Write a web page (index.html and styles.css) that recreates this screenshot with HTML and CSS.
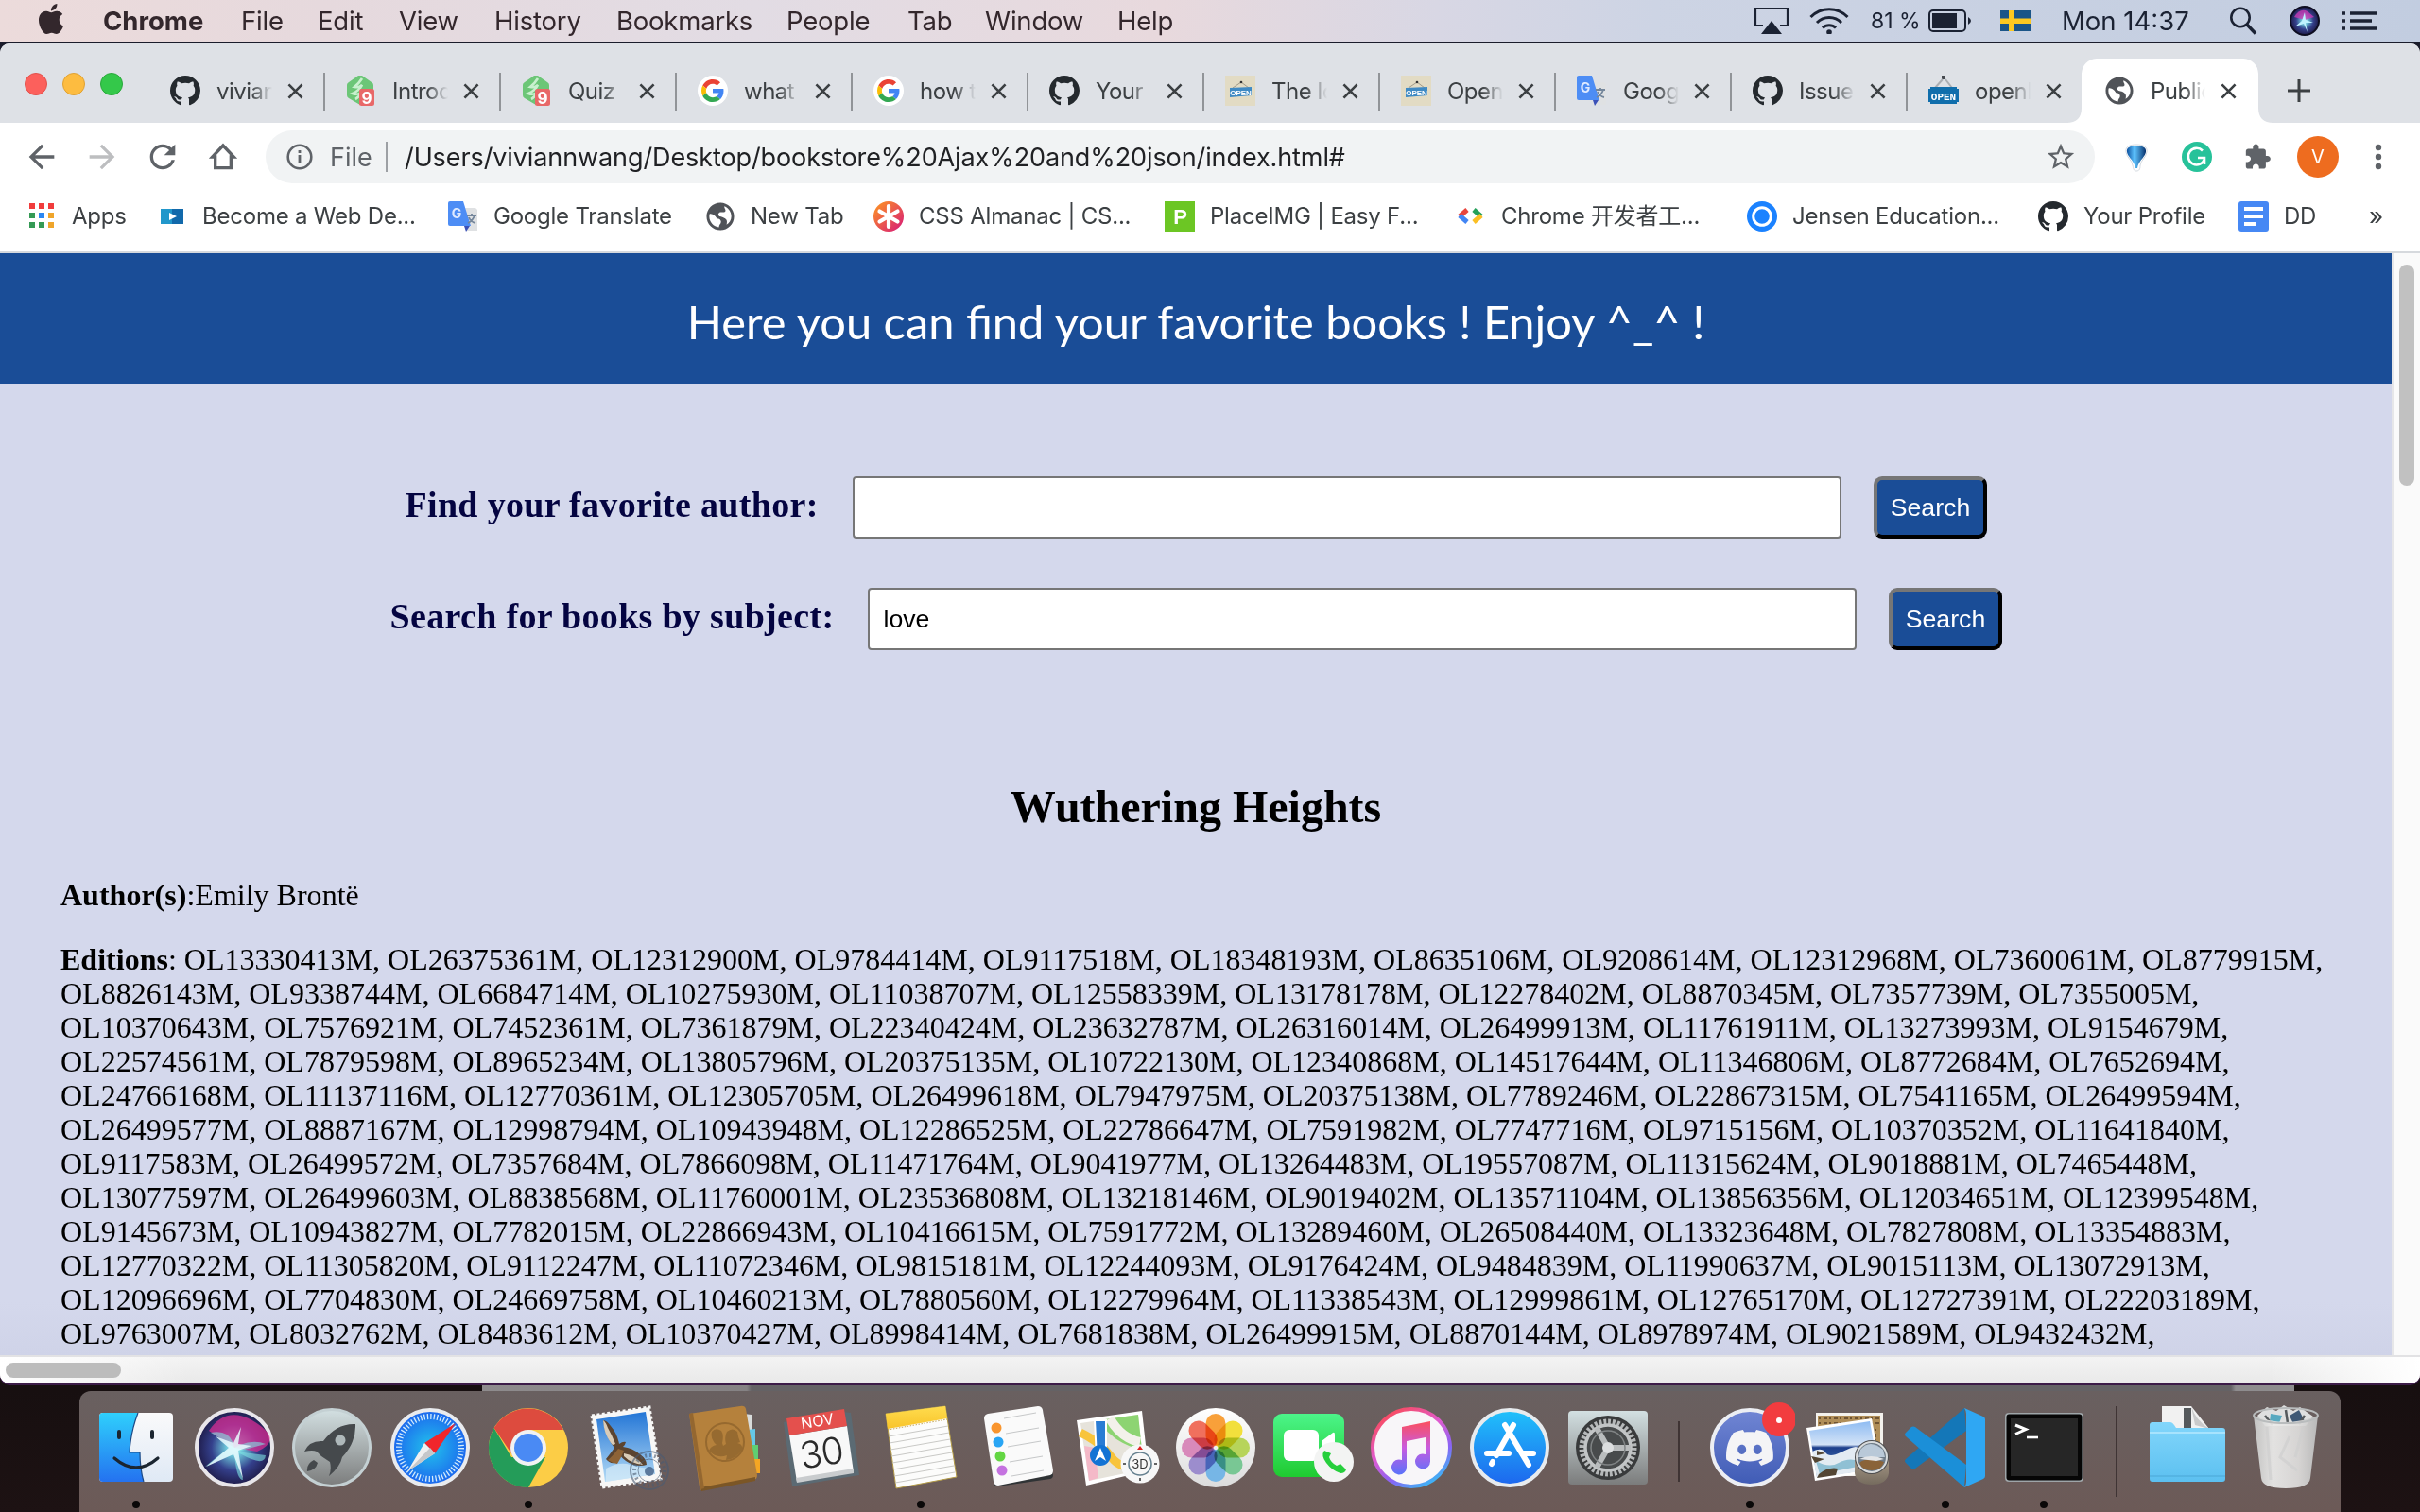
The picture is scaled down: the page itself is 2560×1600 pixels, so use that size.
FILE: index.html
```html
<!DOCTYPE html>
<html lang="en">
<head>
<meta charset="utf-8">
<title>Public library</title>
<link rel="stylesheet" href="styles.css">
</head>
<body>
<svg class="defs" width="0" height="0">
  <defs>
    <linearGradient id="finderL" x2="0" y2="1"><stop offset="0" stop-color="#2fd0fc"/><stop offset="1" stop-color="#2472f0"/></linearGradient>
    <linearGradient id="finderR" x2="0" y2="1"><stop offset="0" stop-color="#fafafb"/><stop offset="1" stop-color="#dfe9f5"/></linearGradient>
    <radialGradient id="siriG" cx=".5" cy=".5" r=".55"><stop offset="0" stop-color="#d8fbff"/><stop offset=".2" stop-color="#6cc4d8"/><stop offset=".55" stop-color="#34408c"/><stop offset="1" stop-color="#191238"/></radialGradient>
    <linearGradient id="metal" x2="0" y2="1"><stop offset="0" stop-color="#d3e0e2"/><stop offset="1" stop-color="#7b7c7c"/></linearGradient>
    <radialGradient id="safariG"><stop offset="0" stop-color="#22c3ec"/><stop offset="1" stop-color="#1c66ee"/></radialGradient>
    <linearGradient id="sky" x2="0" y2="1"><stop offset="0" stop-color="#2275d6"/><stop offset="1" stop-color="#b5dcf6"/></linearGradient>
    <linearGradient id="white" x2="0" y2="1"><stop offset="0" stop-color="#fff"/><stop offset="1" stop-color="#dcdcdc"/></linearGradient>
    <linearGradient id="yellow" x2="0" y2="1"><stop offset="0" stop-color="#ffdc4e"/><stop offset="1" stop-color="#f8c42a"/></linearGradient>
    <linearGradient id="green" x2="0" y2="1"><stop offset="0" stop-color="#4cf58a"/><stop offset="1" stop-color="#1fca30"/></linearGradient>
    <linearGradient id="music" x1=".2" x2=".8" y2="1"><stop offset="0" stop-color="#fb4a55"/><stop offset=".4" stop-color="#e05bd0"/><stop offset=".7" stop-color="#8a63f5"/><stop offset="1" stop-color="#2fc3f5"/></linearGradient>
    <linearGradient id="note" x2="0" y2="1"><stop offset="0" stop-color="#fb4f5e"/><stop offset=".5" stop-color="#c85be0"/><stop offset="1" stop-color="#5a72fa"/></linearGradient>
    <linearGradient id="store" x2="0" y2="1"><stop offset="0" stop-color="#20c2fb"/><stop offset="1" stop-color="#1d66ee"/></linearGradient>
    <linearGradient id="discord" x2="0" y2="1"><stop offset="0" stop-color="#7186d4"/><stop offset="1" stop-color="#3f5bb5"/></linearGradient>
    <linearGradient id="folder" x2="0" y2="1"><stop offset="0" stop-color="#82d6fb"/><stop offset="1" stop-color="#5cc0f0"/></linearGradient>
    <linearGradient id="bin" x2="1" y2="0"><stop offset="0" stop-color="#c9cac9"/><stop offset=".3" stop-color="#ececeb"/><stop offset=".7" stop-color="#dedddc"/><stop offset="1" stop-color="#bfc0c0"/></linearGradient>
    <linearGradient id="css" x2="1" y2="1"><stop offset="0" stop-color="#ff9a1f"/><stop offset="1" stop-color="#d6177b"/></linearGradient>
    <linearGradient id="balloon" x2="1" y2="0"><stop offset="0" stop-color="#0b4f9e"/><stop offset=".4" stop-color="#5fc4ff"/><stop offset="1" stop-color="#05306c"/></linearGradient>
    <linearGradient id="sea" x2="0" y2="1"><stop offset="0" stop-color="#8fbcf2"/><stop offset=".42" stop-color="#d3e3f7"/><stop offset=".47" stop-color="#1d3f8c"/><stop offset="1" stop-color="#4b7fb8"/></linearGradient>
    <linearGradient id="loupe" x2="0" y2="1"><stop offset="0" stop-color="#a49684"/><stop offset="1" stop-color="#756b5e"/></linearGradient>
  </defs>
</svg>
<svg class="symbols">
  <symbol id="github" viewBox="0 0 16 16"><path fill="#24292e" d="M8 0C3.58 0 0 3.58 0 8c0 3.54 2.29 6.53 5.47 7.59.4.07.55-.17.55-.38 0-.19-.01-.82-.01-1.49-2.01.37-2.53-.49-2.69-.94-.09-.23-.48-.94-.82-1.13-.28-.15-.68-.52-.01-.53.63-.01 1.08.58 1.23.82.72 1.21 1.87.87 2.33.66.07-.52.28-.87.51-1.07-1.78-.2-3.64-.89-3.64-3.95 0-.87.31-1.59.82-2.15-.08-.2-.36-1.02.08-2.12 0 0 .67-.21 2.2.82.64-.18 1.32-.27 2-.27s1.36.09 2 .27c1.53-1.04 2.2-.82 2.2-.82.44 1.1.16 1.92.08 2.12.51.56.82 1.27.82 2.15 0 3.07-1.87 3.75-3.65 3.95.29.25.54.73.54 1.48 0 1.07-.01 1.93-.01 2.2 0 .21.15.46.55.38A8.01 8.01 0 0 0 16 8c0-4.42-3.58-8-8-8z"/></symbol>
  <symbol id="google" viewBox="0 0 64 64"><circle cx="32" cy="32" r="32" fill="#fff"/><g transform="translate(8 8)"><path fill="#EA4335" d="M24 9.5c3.54 0 6.71 1.22 9.21 3.6l6.85-6.85C35.9 2.38 30.47 0 24 0 14.62 0 6.51 5.38 2.56 13.22l7.98 6.19C12.43 13.72 17.74 9.5 24 9.5z"/><path fill="#4285F4" d="M46.98 24.55c0-1.57-.15-3.09-.38-4.55H24v9.02h12.94c-.58 2.96-2.26 5.48-4.78 7.18l7.73 6c4.51-4.18 7.09-10.36 7.09-17.65z"/><path fill="#FBBC05" d="M10.53 28.59c-.48-1.45-.76-2.99-.76-4.59s.27-3.14.76-4.59l-7.98-6.19C.92 16.46 0 20.12 0 24c0 3.88.92 7.54 2.56 10.78l7.97-6.19z"/><path fill="#34A853" d="M24 48c6.48 0 11.93-2.13 15.89-5.81l-7.73-6c-2.15 1.45-4.92 2.3-8.16 2.3-6.26 0-11.57-4.22-13.47-9.91l-7.98 6.19C6.51 42.62 14.62 48 24 48z"/></g></symbol>
  <symbol id="treehouse" viewBox="0 0 32 32"><path d="M13 0q2-1 4 0l10 7q2 1 2 3v11q0 2-2 3L15 31 3 24q-2-1-2-3V10q0-2 2-3z" fill="#6cc677"/><path d="M17 3q-3 5-8 9 5 1 8-2-3 6-10 9 5 2 9-1-2 5-6 7" fill="none" stroke="#c9f0ce" stroke-width="2.600"/><rect x="14" y="14" width="16" height="18" rx="2.500" fill="#e86868"/><text x="22" y="29.500" text-anchor="middle" class="fav-nine">9</text></symbol>
  <symbol id="opensign" viewBox="0 0 32 32"><path fill="#e2dbc4" d="M0 0h32v32H0z"/><path d="M8 13l9-6 8 6" fill="none" stroke="#a09a88"/><circle cx="17" cy="7" r="1.300" fill="#333"/><path d="M5 13l23-1v9L5 23z" fill="#3f8ac4"/><text x="16.500" y="21" text-anchor="middle" class="fav-open">OPEN</text></symbol>
  <symbol id="openlib" viewBox="0 0 32 32"><path fill="#45494f" d="M14 0h4v4h-4z"/><path d="M15 4L7 13M18 4l7 9" stroke="#aaaeb3" stroke-width="2"/><path fill="#106eac" d="M2 12h28v2h2v14h-2v2H2v-2H0V14h2z"/><text x="16" y="26" text-anchor="middle" class="fav-openlib">OPEN</text></symbol>
  <symbol id="translate" viewBox="0 0 32 32"><path d="M12 7h17l2 2v22H19z" fill="#dfe1e3"/><path d="M17 26h6l-4 6z" fill="#3b51b8"/><path d="M2 0h14l8 26H2q-2 0-2-2V2q0-2 2-2z" fill="#4d8df5"/><text x="9" y="18" text-anchor="middle" class="fav-g">G</text><path d="M20 15h10M25 13v2M28 15q-2 6-7 8M22 17q2 5 7 6" fill="none" stroke="#74869b" stroke-width="1.800"/></symbol>
  <symbol id="globe" viewBox="1 1 22 22"><path fill="#505358" d="M12 2C6.480 2 2 6.480 2 12s4.480 10 10 10 10-4.480 10-10S17.520 2 12 2zm-1 17.930c-3.950-.49-7-3.850-7-7.930 0-.62.08-1.210.21-1.790C6 9.500 9 12 9.500 13.500c2 0 3 1 3 2.500s-1.500 2-1.500 3.930zM16.500 18c.5-2 .5-3.500-1-4.500s-2-1-4-1.500c-1.500-1-1-2.500 0-3 1.500-.5 2.500.5 4-.5 1-1.500-1-2.500-.5-3.910 2.930 1.190 5 4.060 5 7.410 0 2.800-1.500 4.800-3.500 6z"/></symbol>
  <symbol id="x" viewBox="0 0 18 18"><path d="M1.500 1.500l15 15M16.500 1.500l-15 15" stroke="#3c4043" stroke-width="2.800"/></symbol>
</svg>

<header class="menubar">
  <nav class="menus">
    <svg class="apple" viewBox="0 0 24 24"><path fill="#33272c" d="M12.152 6.896c-.948 0-2.415-1.078-3.960-1.040-2.040.027-3.910 1.183-4.961 3.014-2.117 3.675-.546 9.103 1.519 12.090 1.013 1.454 2.208 3.090 3.792 3.039 1.520-.065 2.090-.987 3.935-.987 1.831 0 2.350.987 3.960.948 1.637-.026 2.676-1.480 3.676-2.948 1.156-1.688 1.636-3.325 1.662-3.415-.039-.013-3.182-1.221-3.220-4.857-.026-3.040 2.480-4.494 2.597-4.559-1.429-2.090-3.623-2.324-4.390-2.376-2-.156-3.675 1.090-4.610 1.090zM15.530 3.830c.843-1.012 1.400-2.427 1.245-3.830-1.207.052-2.662.805-3.532 1.818-.78.896-1.454 2.338-1.273 3.714 1.338.104 2.715-.688 3.559-1.701"/></svg>
    <b>Chrome</b><span>File</span><span>Edit</span><span>View</span><span>History</span><span>Bookmarks</span><span>People</span><span>Tab</span><span>Window</span><span>Help</span>
  </nav>
  <div class="status">
    <svg width="36" height="28" viewBox="0 0 36 28"><path d="M9 19H1V1h34v18h-8" fill="none" stroke="#1b2233" stroke-width="2.200"/><path d="M18 14l11 14H7z" fill="#1b2233"/></svg>
    <svg width="42" height="28" viewBox="0 0 42 28"><g fill="none" stroke="#1b2233" stroke-width="3"><path d="M1.500 10a27 27 0 0 1 39 0"/><path d="M8 16a18 18 0 0 1 26 0"/><path d="M14 21.500a10 10 0 0 1 14 0"/></g><circle cx="21" cy="26" r="2.800" fill="#1b2233"/></svg>
    <span class="percent">81 %</span>
    <svg width="46" height="24" viewBox="0 0 46 24"><rect x="1" y="1" width="38" height="22" rx="4" fill="none" stroke="#1b2233" stroke-width="2"/><rect x="4" y="4" width="26" height="16" fill="#1b2233"/><path d="M42 8q6 4 0 8z" fill="#1b2233"/></svg>
    <svg width="32" height="22" viewBox="0 0 32 22"><path fill="#1a5588" d="M0 0h32v22H0z"/><path fill="#fcc820" d="M9 0h6v22H9zM0 8.500h32v5.500H0z"/></svg>
    <span class="clock">Mon 14:37</span>
    <svg width="30" height="30" viewBox="0 0 30 30"><circle cx="12" cy="11.500" r="9.700" fill="none" stroke="#1b2233" stroke-width="2.600"/><path d="M19 19l9 9.500" stroke="#1b2233" stroke-width="3.400"/></svg>
    <svg width="32" height="32" viewBox="-16 -16 32 32"><circle r="15" fill="url(#siriG)" stroke="#0d0d20" stroke-width="2"/><path d="M-11-4q6-10 14-6l7 6-10 3z" fill="#d239b5" opacity=".75"/><path d="M0-9L1-1 9 2 1 2 3 12-1 3-10 6-3 0z" fill="#bff3ff"/></svg>
    <svg width="38" height="20" viewBox="0 0 38 20"><path d="M0 2h4M0 10h4M0 18h4M9 2h28M9 10h23M9 18h28" stroke="#1b2233" stroke-width="3.600"/></svg>
  </div>
</header>

<main class="window">
  <div class="tabstrip">
    <div class="lights"><i class="red"></i><i class="amber"></i><i class="lime"></i></div>
    <div class="tab"><svg><use href="#github"/></svg><span>viviann</span><svg class="x"><use href="#x"/></svg></div>
    <div class="tab"><svg><use href="#treehouse"/></svg><span>Introdu</span><svg class="x"><use href="#x"/></svg></div>
    <div class="tab"><svg><use href="#treehouse"/></svg><span>Quiz</span><svg class="x"><use href="#x"/></svg></div>
    <div class="tab"><svg><use href="#google"/></svg><span>what</span><svg class="x"><use href="#x"/></svg></div>
    <div class="tab"><svg><use href="#google"/></svg><span>how to</span><svg class="x"><use href="#x"/></svg></div>
    <div class="tab"><svg><use href="#github"/></svg><span>Your</span><svg class="x"><use href="#x"/></svg></div>
    <div class="tab"><svg><use href="#opensign"/></svg><span>The lo</span><svg class="x"><use href="#x"/></svg></div>
    <div class="tab"><svg><use href="#opensign"/></svg><span>Open</span><svg class="x"><use href="#x"/></svg></div>
    <div class="tab"><svg><use href="#translate"/></svg><span>Google</span><svg class="x"><use href="#x"/></svg></div>
    <div class="tab"><svg><use href="#github"/></svg><span>Issues</span><svg class="x"><use href="#x"/></svg></div>
    <div class="tab last"><svg><use href="#openlib"/></svg><span>openli</span><svg class="x"><use href="#x"/></svg></div>
    <div class="tab active"><svg><use href="#globe"/></svg><span>Public</span><svg class="x"><use href="#x"/></svg></div>
    <svg class="plus" viewBox="0 0 24 24"><path d="M12 0v24M0 12h24" stroke="#3c4043" stroke-width="3"/></svg>
  </div>

  <div class="toolbar">
    <svg class="nav" viewBox="0 0 24 24"><path fill="#5f6368" d="M20 11H7.830l5.590-5.590L12 4l-8 8 8 8 1.410-1.410L7.830 13H20v-2z"/></svg>
    <svg class="nav" viewBox="0 0 24 24"><path fill="#bdbec0" d="M4 11h12.170l-5.590-5.590L12 4l8 8-8 8-1.410-1.410L16.170 13H4v-2z"/></svg>
    <svg class="nav" viewBox="0 0 24 24"><path fill="#5f6368" d="M17.650 6.350C16.200 4.900 14.210 4 12 4c-4.420 0-7.990 3.580-7.990 8s3.570 8 7.990 8c3.730 0 6.840-2.550 7.730-6h-2.080c-.82 2.330-3.040 4-5.650 4-3.310 0-6-2.690-6-6s2.690-6 6-6c1.660 0 3.140.69 4.220 1.780L13 11h7V4l-2.350 2.350z"/></svg>
    <svg class="nav" viewBox="0 0 24 24"><path fill="none" stroke="#5f6368" stroke-width="2" d="M12 4.800L5.200 12H7v7h10v-7h1.800z"/></svg>
    <div class="omnibox">
      <svg class="info" viewBox="0 0 28 28"><circle cx="14" cy="14" r="12.300" fill="none" stroke="#5f6368" stroke-width="2.600"/><path d="M14 12v9M14 7v3" stroke="#5f6368" stroke-width="2.800"/></svg>
      <span class="scheme">File</span><i class="bar"></i>
      <span class="url">/Users/viviannwang/Desktop/bookstore%20Ajax%20and%20json/index.html#</span>
      <svg class="star" viewBox="0 0 24 24"><path fill="#5f6368" d="M22 9.240l-7.190-.62L12 2 9.190 8.630 2 9.240l5.460 4.730L5.820 21 12 17.270 18.180 21l-1.630-7.030L22 9.240zM12 15.400l-3.760 2.270 1-4.280-3.320-2.880 4.380-.38L12 6.100l1.710 4.040 4.380.38-3.320 2.880 1 4.280L12 15.400z"/></svg>
    </div>
    <div class="extensions">
      <svg viewBox="0 0 32 32"><path d="M16 3c7 0 12 2 11 8-1 6-6 8-7 14 0 4-1 6-4 6s-3-2-4-6C11 19 6 17 5 11c-1-6 4-8 11-8z" fill="#fff" stroke="#d5dae0"/><path d="M16 4c6 0 11 2 10 7-1 5-6 8-8.500 14.500L17 28h-2l-.5-2.500C12 19 7 16 6 11c-1-5 4-7 10-7z" fill="url(#balloon)"/></svg>
      <svg viewBox="0 0 32 32"><circle cx="16" cy="16" r="16" fill="#27c29a"/><path d="M22 9.500a8.800 8.800 0 1 0 2 9M17 17h7v7" fill="none" stroke="#fff" stroke-width="2.600"/></svg>
      <svg viewBox="0 0 24 24"><path fill="#5f6368" transform="translate(1 1) scale(.93)" d="M20.500 11H19V7c0-1.100-.9-2-2-2h-4V3.500C13 2.120 11.880 1 10.500 1S8 2.120 8 3.500V5H4c-1.100 0-1.990.9-1.990 2v3.800H3.500c1.490 0 2.700 1.210 2.700 2.700s-1.210 2.700-2.700 2.700H2V20c0 1.100.9 2 2 2h3.800v-1.500c0-1.490 1.210-2.700 2.700-2.700 1.490 0 2.700 1.210 2.700 2.700V22H17c1.100 0 2-.9 2-2v-4h1.500c1.380 0 2.500-1.120 2.500-2.500S21.880 11 20.500 11z"/></svg>
      <span class="avatar">V</span>
      <svg viewBox="0 0 32 32"><g fill="#5f6368"><circle cx="16" cy="6" r="3.200"/><circle cx="16" cy="16" r="3.200"/><circle cx="16" cy="26" r="3.200"/></g></svg>
    </div>
  </div>

  <div class="bookmarks">
    <div><svg viewBox="0 0 32 32"><g fill="#f13c3c"><path d="M3 2h6v6H3zM13 2h6v6h-6zM23 2h6v6h-6z"/></g><path fill="#359a55" d="M3 12h6v6H3zM3 22h6v6H3zM13 22h6v6h-6z"/><path fill="#2b87f3" d="M13 12h6v6h-6z"/><path fill="#efa52b" d="M23 12h6v6h-6zM23 22h6v6h-6z"/></svg><span>Apps</span></div>
    <div><svg viewBox="0 0 32 32"><path fill="#2197cb" d="M4 8h24v16H4z"/><path fill="#1269ab" d="M16 8h12v16H16z"/><path d="M13 12l8 4-8 4z" fill="#fff"/></svg><span>Become a Web De...</span></div>
    <div><svg><use href="#translate"/></svg><span>Google Translate</span></div>
    <div><svg><use href="#globe"/></svg><span>New Tab</span></div>
    <div><svg viewBox="0 0 32 32"><circle cx="16" cy="16" r="16" fill="url(#css)"/><path d="M16 5v22M6.500 10.500l19 11M25.500 10.500l-19 11" stroke="#fff" stroke-width="4.200" stroke-linecap="round"/></svg><span>CSS Almanac | CS...</span></div>
    <div><svg viewBox="0 0 32 32"><path fill="#6cc624" d="M0 0h32v32H0z"/><text x="16.500" y="24" text-anchor="middle" class="fav-p">P</text></svg><span>PlaceIMG | Easy F...</span></div>
    <div><svg viewBox="0 0 32 32"><path d="M12 9l-8 7" stroke="#e8453c" stroke-width="5"/><path d="M4 15l8 7" stroke="#4285f4" stroke-width="5"/><path d="M19 9l8 7" stroke="#25a05a" stroke-width="5"/><path d="M27 15l-8 7" stroke="#fbbf24" stroke-width="5"/></svg><span>Chrome 开发者工...</span></div>
    <div><svg viewBox="0 0 32 32"><circle cx="16" cy="16" r="16" fill="#1b82ff"/><circle cx="16" cy="16" r="9.300" fill="none" stroke="#fff" stroke-width="3"/></svg><span>Jensen Education...</span></div>
    <div><svg><use href="#github"/></svg><span>Your Profile</span></div>
    <div><svg viewBox="0 0 32 32"><rect width="32" height="32" rx="3" fill="#4688f4"/><path d="M6 8h20M6 16h20M6 24h13" stroke="#fff" stroke-width="4"/></svg><span>DD</span></div>
    <span class="more">»</span>
  </div>

  <div class="viewport">
    <div class="page">
      <h1>Here you can find your favorite books ! Enjoy ^_^ !</h1>
      <form class="row author"><label>Find your favorite author:</label><input type="text"><button type="button">Search</button></form>
      <form class="row subject"><label>Search for books by subject:</label><input type="text" value="love"><button type="button">Search</button></form>
      <h2>Wuthering Heights</h2>
      <p><b>Author(s)</b>:Emily Brontë</p>
      <p class="editions"><b>Editions</b>: OL13330413M, OL26375361M, OL12312900M, OL9784414M, OL9117518M, OL18348193M, OL8635106M, OL9208614M, OL12312968M, OL7360061M, OL8779915M,<br>
OL8826143M, OL9338744M, OL6684714M, OL10275930M, OL11038707M, OL12558339M, OL13178178M, OL12278402M, OL8870345M, OL7357739M, OL7355005M,<br>
OL10370643M, OL7576921M, OL7452361M, OL7361879M, OL22340424M, OL23632787M, OL26316014M, OL26499913M, OL11761911M, OL13273993M, OL9154679M,<br>
OL22574561M, OL7879598M, OL8965234M, OL13805796M, OL20375135M, OL10722130M, OL12340868M, OL14517644M, OL11346806M, OL8772684M, OL7652694M,<br>
OL24766168M, OL11137116M, OL12770361M, OL12305705M, OL26499618M, OL7947975M, OL20375138M, OL7789246M, OL22867315M, OL7541165M, OL26499594M,<br>
OL26499577M, OL8887167M, OL12998794M, OL10943948M, OL12286525M, OL22786647M, OL7591982M, OL7747716M, OL9715156M, OL10370352M, OL11641840M,<br>
OL9117583M, OL26499572M, OL7357684M, OL7866098M, OL11471764M, OL9041977M, OL13264483M, OL19557087M, OL11315624M, OL9018881M, OL7465448M,<br>
OL13077597M, OL26499603M, OL8838568M, OL11760001M, OL23536808M, OL13218146M, OL9019402M, OL13571104M, OL13856356M, OL12034651M, OL12399548M,<br>
OL9145673M, OL10943827M, OL7782015M, OL22866943M, OL10416615M, OL7591772M, OL13289460M, OL26508440M, OL13323648M, OL7827808M, OL13354883M,<br>
OL12770322M, OL11305820M, OL9112247M, OL11072346M, OL9815181M, OL12244093M, OL9176424M, OL9484839M, OL11990637M, OL9015113M, OL13072913M,<br>
OL12096696M, OL7704830M, OL24669758M, OL10460213M, OL7880560M, OL12279964M, OL11338543M, OL12999861M, OL12765170M, OL12727391M, OL22203189M,<br>
OL9763007M, OL8032762M, OL8483612M, OL10370427M, OL8998414M, OL7681838M, OL26499915M, OL8870144M, OL8978974M, OL9021589M, OL9432432M,</p>
    </div>
    <div class="vscroll"><i></i></div>
  </div>
  <div class="hscroll"><i></i></div>
</main>

<div class="behind"><i></i></div>

<footer class="dock">
  <div class="slot open"><svg viewBox="-48 -48 96 96"><rect x="-39" y="-37" width="78" height="73" rx="4" fill="url(#finderR)"/><path d="M-35-37H2Q-6-16-7 5H4Q4 22 8 36H-35q-4 0-4-4V-33q0-4 4-4z" fill="url(#finderL)"/><path d="M2-37Q-6-16-7 5H4Q4 22 8 36" fill="none" stroke="#1c4a86" stroke-width="1.200"/><path d="M-18-17v6M17-17v6" stroke="#1b2530" stroke-width="4" stroke-linecap="round"/><path d="M-23 11Q0 31 23 11" fill="none" stroke="#1b2530" stroke-width="3.200" stroke-linecap="round"/></svg></div>
  <div class="slot"><svg viewBox="-48 -48 96 96"><circle r="40" fill="url(#siriG)" stroke="#e8e6ea" stroke-width="4"/><path d="M-27-18Q-8-46 22-27T24 4L0 0z" fill="#d72c92" opacity=".75"/><path d="M-25-16Q-4-20 0 0 18-10 33-4L3 4 33 8Q32 22 2 4L9 34Q2 34 0 6L-31 20Q-12 4-3-1-14-10-25-16z" fill="#7fe3e3" opacity=".6"/><path d="M7-22L4-4 18-2 4 3 9 33-1 7-30 20-6 0-20-12-1-5z" fill="#e9fcff" opacity=".85"/></svg></div>
  <div class="slot"><svg viewBox="-48 -48 96 96"><circle r="40.500" fill="url(#metal)" stroke="#c4d0d3" stroke-width="3"/><path d="M25-25Q5-26-9-7q-15-1-20 11 9-2 13 0L-11 9l9 6q2 8-1 15Q9 20 11 10 26-6 25-25zM-19 13q-8 4-7 12 9-1 11-9z" fill="#45494c"/><circle cx="9" cy="-8" r="5.500" fill="#aeb8ba"/></svg></div>
  <div class="slot"><svg viewBox="-48 -48 96 96"><circle r="40" fill="url(#safariG)" stroke="#e9ebee" stroke-width="4"/><circle r="33" fill="none" stroke="#d5ecfc" stroke-width="6" stroke-dasharray="1.300 2.156"/><path d="M27-26L5 6-6-5z" fill="#f1262b"/><path d="M-24 25L5 6-6-5z" fill="#f0f0f0"/><path d="M-24 25L5 6 0 0z" fill="#c5c7ca"/></svg></div>
  <div class="slot open"><svg viewBox="-48 -48 96 96"><circle r="42" fill="#fccd46"/><path d="M-36.400-21A42 42 0 0 0 0 42L18 10-18 10z" fill="#249c59"/><path d="M-36.400-21A42 42 0 0 1 37-19H0L-16 9z" fill="#dd4b3e"/><circle r="19" fill="#f1f2f2"/><circle r="15" fill="#4a8af4"/></svg></div>
  <div class="slot"><svg viewBox="-48 -48 96 96"><path d="M-37-34L24-43 36 33-26 42z" fill="#f7f7f6" stroke="#f7f7f6" stroke-width="3" stroke-dasharray="3 2.500"/><path d="M-32-30L20-38 30 28-23 36z" fill="url(#sky)"/><path d="M-22 22q14-8 26-4t24 4l1 6-51 8z" fill="#d6ebf8" opacity=".7"/><path d="M-25-29q4 0 8 6 7 8 9 19 4-3 7-2-1 4-3 5 10 1 18 8 7 5 7 11-6 2-14 0-9-3-15-11-2 4-5 9-5 1-9-4 4-5 9-12-10-12-12-29z" fill="#5b4430"/><path d="M-25-29q3 2 5 8 5 9 8 17l-3 1q-9-10-10-26zM-3 6q12 2 20 12-12-1-20-9z" fill="#d9ccb8"/><path d="M-9 1l6 2q-3 8-7 14-6-1-10-4 5-4 11-12z" fill="#8d6337"/><g fill="none" stroke="#4a5b72" opacity=".6"><circle cx="24" cy="24" r="20" stroke-width="2"/><circle cx="24" cy="24" r="16" stroke-width="4" stroke-dasharray="2 3"/><circle cx="24" cy="24" r="12"/></g><circle cx="24" cy="25" r="5" fill="#3f5e86" opacity=".8"/></svg></div>
  <div class="slot"><svg viewBox="-48 -48 96 96"><path d="M20-36l8 1v16h-8z" fill="#d9dcdb"/><path d="M24-19l8-1v17h-8z" fill="#65c8e8"/><path d="M26-3h9v15h-9z" fill="#5fce72"/><path d="M28 12h9v15h-9z" fill="#f5a623"/><path d="M-38-36L16-44q5-1 6 3L34 29q0 4-3 5l-55 11q-3 0-3-3z" fill="#b5813c"/><path d="M-26 42l58-11v4l-57 11z" fill="#7b5626"/><path d="M-38-36l4-1 12 80-4 1z" fill="#946730"/><circle cx="0" cy="-6" r="20" fill="none" stroke="#96692f" stroke-width="2"/><path d="M-17 3q2-5 8-6-7-6-5-14 4-5 10-1 3 4 1 13l1 3 3-2q-2-8 1-13 6-5 11 0 1 7 3 11l-3 1q6 1 5 7-8 11-17 11l1-5q-11 4-19-5z" fill="#966a30"/></svg></div>
  <div class="slot"><svg viewBox="-48 -48 96 96"><path d="M-41-27l8-2L22-38l8 1L39 29l-66 11-5 0z" fill="#5b6a73"/><path d="M-35-13L26-23 33 26-27 36z" fill="#f8f8f8"/><path d="M-28 32L33 22v5l-60 10z" fill="#c9ccce"/><path d="M-38-31L23-41 26-23-35-13z" fill="#e4504d"/><g transform="rotate(-9)"><text x="-1" y="-23" text-anchor="middle" class="cal-month">NOV</text><text x="-2" y="19" text-anchor="middle" class="cal-day">30</text></g></svg></div>
  <div class="slot open"><svg viewBox="-48 -48 96 96"><path d="M-37-36L26-44 38 31-26 43z" fill="#fcfcfb" stroke="#b29a45"/><path d="M-37-36L26-44 28-31-35-20z" fill="url(#yellow)"/><path d="M-35-19L28-30" stroke="#c3a75f" stroke-dasharray="1.500 1.500"/><path d="M-34-12l63-11M-33-5l63-11M-32 2L31-9M-31 9L32-2M-30 16L33 5M-29 23l63-11M-28 30l63-11M-27 37l63-11" stroke="#c9c9c6"/></svg></div>
  <div class="slot"><svg viewBox="-48 -48 96 96"><path d="M-33-33q-3 1-3 4l9 66q1 4 4 4L33 33q3-1 3-4L25-40z" fill="#2f3335"/><path d="M-33-36L20-44q4 0 5 4L36 24q0 4-3 5L-22 40q-4 0-5-4L-37-31q0-4 4-5z" fill="#fafafa"/><circle cx="-24" cy="-21" r="5.500" fill="#f9952e"/><circle cx="-22" cy="-6" r="5.500" fill="#29a5f4"/><circle cx="-20" cy="9" r="5.500" fill="#63d643"/><circle cx="-18" cy="24" r="5.500" fill="#c573e0"/><path d="M-16-31l34-6M-14-15l35-6M-12-1l35-6M-10 15l35-6M-8 30l34-6" stroke="#c6c8c9"/></svg></div>
  <div class="slot"><svg viewBox="-48 -48 96 96"><path d="M-43-29L26-39 33 24-33 40z" fill="#fff"/><path d="M-39-26L22-35 28 23-30 35z" fill="#e6e3db"/><path d="M-20-29L22-35 26 2Q-4-4-20-29z" fill="#8dd472"/><path d="M-8-31Q4-10 24-6" fill="none" stroke="#f3f1ea" stroke-width="10"/><path d="M-39-16Q-18-6-8 8T16 20" fill="none" stroke="#f8c43c" stroke-width="9"/><path d="M-35-2l11 2 4 32-10 3z" fill="#f4b9c8"/><path d="M-24-29h12V10h-10z" fill="#2a7cd4" stroke="#fff" stroke-width="2"/><circle cx="-18" cy="8" r="11" fill="#1273d4"/><path d="M-18 0l6 14-6-4-6 4z" fill="#fff"/><circle cx="24" cy="17" r="20.500" fill="#f7f7f7"/><circle cx="24" cy="17" r="12" fill="none" stroke="#65808f" stroke-width="1.600"/><path d="M24-2l3 4h-6z" fill="#e02020"/><path d="M6 17h3M39 17h3M24 32v3" stroke="#333" stroke-width="1.500"/><text x="24" y="22" text-anchor="middle" class="map-3d">3D</text></svg></div>
  <div class="slot"><svg viewBox="-48 -48 96 96"><circle r="42" fill="url(#white)"/><g class="petals"><rect x="-10.500" y="-36" width="21" height="34" rx="10.500" fill="#f8a03a"/><rect x="-10.500" y="-36" width="21" height="34" rx="10.500" fill="#f2df3c" transform="rotate(45)"/><rect x="-10.500" y="-36" width="21" height="34" rx="10.500" fill="#b7d45a" transform="rotate(90)"/><rect x="-10.500" y="-36" width="21" height="34" rx="10.500" fill="#79c794" transform="rotate(135)"/><rect x="-10.500" y="-36" width="21" height="34" rx="10.500" fill="#76b6e6" transform="rotate(180)"/><rect x="-10.500" y="-36" width="21" height="34" rx="10.500" fill="#9c8dcd" transform="rotate(225)"/><rect x="-10.500" y="-36" width="21" height="34" rx="10.500" fill="#d889ba" transform="rotate(270)"/><rect x="-10.500" y="-36" width="21" height="34" rx="10.500" fill="#f0705d" transform="rotate(315)"/></g></svg></div>
  <div class="slot"><svg viewBox="-48 -48 96 96"><rect x="-42" y="-36" width="75" height="67" rx="9" fill="url(#green)"/><rect x="-31" y="-19" width="37" height="33" rx="6" fill="#fff"/><path d="M9-7l12-9q2-1 2 2V9q0 2-2 1L9 3z" fill="#fff"/><circle cx="22" cy="15" r="21" fill="#f3f4f3"/><path d="M12 3q-4 5 2 13t15 11q5 0 6-4l-6-6-4 2q-6-3-8-9l2-4z" fill="#26cf3c"/></svg></div>
  <div class="slot"><svg viewBox="-48 -48 96 96"><circle r="41" fill="#f8f6f9" stroke="url(#music)" stroke-width="4"/><path d="M-10-22L20-28V14a8 8 0 1 1-5-7V-11L-5-7V20a8 8 0 1 1-5-7z" fill="url(#note)"/></svg></div>
  <div class="slot"><svg viewBox="-48 -48 96 96"><circle r="40" fill="url(#store)" stroke="#e7ebee" stroke-width="4"/><g stroke="#fff" stroke-width="6" stroke-linecap="round"><path d="M4-24L-14 8M-5-24L20 18M-24 6H-1M14 6h11M-18 15l-1 2"/></g></svg></div>
  <div class="slot"><svg viewBox="-48 -48 96 96"><rect x="-42" y="-39" width="84" height="78" rx="4" fill="url(#metal)"/><circle r="34" fill="#393b3c"/><circle r="27" fill="none" stroke="#b5b8b9" stroke-width="7" stroke-dasharray="2.800 1.900"/><circle r="24" fill="#484b4c" stroke="#c2c5c6" stroke-width="3.500"/><path d="M0 0h24M0 0l-12-21M0 0l-12 21" stroke="#b9bcbd" stroke-width="6"/><circle r="6" fill="#dcdedf"/><circle r="18" fill="none" stroke="#808485" stroke-width="1.500"/></svg></div>
  <i class="rule short"></i>
  <div class="slot open"><svg viewBox="-48 -48 96 96"><circle r="40" fill="url(#discord)" stroke="#eceef3" stroke-width="4"/><path transform="translate(-25 -25) scale(2.080)" fill="#f4f4f6" d="M20.317 4.370a19.791 19.791 0 0 0-4.885-1.515c-.25.4-.5.900-.687 1.286-1.845-.276-3.680-.276-5.487 0-.2-.45-.45-.9-.696-1.286a19.736 19.736 0 0 0-4.917 1.542C.533 9.046-.319 13.580.099 18.058c2.053 1.564 4.072 2.479 6.024 3.085.5-.65.930-1.320 1.310-2.022-.7-.26-1.320-.56-1.950-1.020l.45-.42c3.928 1.793 8.180 1.793 12.061 0l.45.42c-.6.430-1.250.750-1.920 1.020.38.7.810 1.370 1.310 2.022 1.961-.607 3.980-1.522 6.033-3.085.5-5.177-.838-9.674-3.548-13.688zM8.020 15.331c-1.182 0-2.157-1.086-2.157-2.419 0-1.333.956-2.419 2.157-2.419 1.211 0 2.176 1.095 2.157 2.419 0 1.333-.956 2.419-2.157 2.419zm7.975 0c-1.183 0-2.157-1.086-2.157-2.419 0-1.333.955-2.419 2.157-2.419 1.211 0 2.176 1.095 2.157 2.419 0 1.333-.946 2.419-2.157 2.419z"/><circle cx="31" cy="-30" r="18" fill="#f23c3f"/><circle cx="31" cy="-29" r="3" fill="#fff"/></svg></div>
  <div class="slot"><svg viewBox="-48 -48 96 96"><path d="M-33-37H38V30H-33z" fill="#f3f1ed"/><path d="M-31-34H35V27H-31z" fill="#b08e58"/><path d="M-30-31h64M-30-26h64M30-20v40" stroke="#6f5433" stroke-width="2" stroke-dasharray="2 3 4 2"/><path d="M-43-21L26-31 36 24-34 35z" fill="#fff"/><path d="M-40-18L24-28 33 22-32 31z" fill="url(#sea)"/><path d="M-37 4q10-5 14 1t16 0 16-6l20 6 4 17-65 10z" fill="#e3ebf2"/><path d="M-33 14q14 8 24 2t22-2l-2 6-40 8z" fill="#8fc0d4"/><path d="M-38 9l14 3-10 4zM-30 28q10-8 20-6l-2 7-20 3zM-32 3l9 3-9 2z" fill="#534634"/><path d="M8 13h36v14q-2 12-18 12T8 27z" fill="url(#loupe)"/><circle cx="26" cy="10" r="18" fill="#4b4c4d"/><circle cx="26" cy="10" r="16" fill="#6d7a86" stroke="#d9dcdd" stroke-width="2"/><path d="M14 2q10-12 24 0l2 8H12z" fill="#b9c9d8"/><path d="M13 16q8-7 26-1-3 9-13 9t-13-8z" fill="#8a6338"/><path d="M13 12q12-6 26 0l-8 2z" fill="#e4e6e8"/></svg></div>
  <div class="slot open"><svg viewBox="-48 -48 96 96"><path d="M20-42L-42 12q-2 2 0 4l6 6q2 1 4 0L22-18z" fill="#1477b8"/><path d="M-42-16q-2 2 0 4L20 42 22 18-32-22q-2-1-4 0z" fill="#1b8fd8"/><path d="M20-42l20 9q2 1 2 3V30q0 2-2 3L20 42q2-3 2-6V-36q0-3-2-6z" fill="#2fa7f3"/></svg></div>
  <div class="slot open"><svg viewBox="-48 -48 96 96"><rect x="-41" y="-37" width="83" height="73" rx="4" fill="#9ea5a8"/><rect x="-39.500" y="-35.500" width="80" height="70" rx="3" fill="#060606"/><rect x="-35" y="-31" width="71" height="61" fill="#262626"/><path d="M-30-24l11 4.500-11 5" fill="none" stroke="#fff" stroke-width="3"/><path d="M-18-11h12" stroke="#fff" stroke-width="2.600"/></svg></div>
  <i class="rule tall"></i>
  <div class="slot"><svg viewBox="-48 -48 96 96"><path d="M-27-44H4L23-20H-27z" fill="#f1f1f1"/><path d="M-4-42h8v24h-8z" fill="#55595c"/><path d="M4-44q4 14 19 24L8-24z" fill="#c9cacb"/><path d="M-40-24q0-3 3-3h19q2 0 4 3l2 3h49q3 0 3 3V33q0 3-3 3h-74q-3 0-3-3z" fill="url(#folder)"/><path d="M-40-16h80" stroke="#a7e3fd" stroke-width="2"/><path d="M-40 30h80" stroke="#4ba7d6"/></svg></div>
  <div class="slot"><svg viewBox="-48 -48 96 96"><path d="M-30-34l10-9 10 4 8-6 10 6 7-4 14 10-8 10H-22z" fill="#dfe0e0"/><path d="M-16-36l12 2-3 8-10-1z" fill="#58a9c0"/><path d="M4-34l10-6 6 12-12 3z" fill="#3e5875"/><path d="M-22-34l8 10M0-40l2 14M20-34l-6 9" stroke="#55595c" stroke-width="2.500"/><path d="M-34-34Q0-20 34-34L26 32q-1 11-26 11T-26 32z" fill="url(#bin)" opacity=".93"/><path d="M-20-22L-16 34M4-12l-10 22 18 14M18-20l-8 30" stroke="#cfcfce" stroke-width="3" fill="none" opacity=".7"/><ellipse cy="-34" rx="34" ry="8" fill="none" stroke="#b9bcbd" stroke-width="2"/></svg></div>
</footer>
</body>
</html>
```
FILE: styles.css
```css
* { box-sizing: border-box; }
html, body { margin: 0; height: 1600px; overflow: hidden; }
body {
  width: 2560px;
  display: flex;
  flex-direction: column;
  font-family: Inter, "Noto Sans CJK SC", sans-serif;
  background: linear-gradient(#1a1c2b 0, #1a1c2b 1300px, #170f10 1470px, #1d1213 1600px);
}
i { display: block; font-style: normal; }
svg { display: block; flex: none; }
.defs { position: absolute; }
.symbols { display: none; }
.fav-nine { font: bold 17px Inter, sans-serif; fill: #fff; }
.fav-open { font: bold 8px "Liberation Sans", sans-serif; fill: #fff; }
.fav-openlib { font: bold 11px "Liberation Mono", monospace; fill: #fff; }
.fav-g { font: bold 14px Inter, sans-serif; fill: #dfeaff; }
.fav-p { font: bold 22px "Liberation Sans", sans-serif; fill: #fff; }
.cal-month { font: 16px Inter, sans-serif; fill: #fff; }
.cal-day { font: 300 39px Inter, sans-serif; fill: #2b2b2b; letter-spacing: -1px; }
.map-3d { font: 13px Inter, sans-serif; fill: #333; }
.petals rect { mix-blend-mode: multiply; }
.petals { isolation: isolate; }

/* macOS menu bar */
.menubar {
  flex: none;
  height: 44px;
  display: flex;
  justify-content: space-between;
  background: linear-gradient(90deg, #ecdbdb 0, #e6d9dd 340px, #e2dce4 800px, #e8d9dd 1230px, #d8d7e4 1520px, #cdd4e4 1750px, #c2cde0 2560px);
  color: #33272c;
  font-size: 27.5px;
  line-height: 44px;
  white-space: nowrap;
}
.menus {
  display: grid;
  grid-template-columns: 71px 146px 81px 86px 101px 129px 180px 128px 82px 140px 100px;
  padding-left: 38px;
}
.apple { width: 32px; height: 32px; margin-top: 4px; }
.menus b { font-weight: 700; letter-spacing: 0; }
.menus span { letter-spacing: -0.2px; }
.status {
  display: grid;
  grid-template-columns: 58px 65px 61px 76px 65px 177px 64px 55px 83px;
  align-items: center;
  color: #1b2233;
}
.percent { font-size: 23px; letter-spacing: 0; }
.clock { letter-spacing: 0; }

/* browser window */
.window {
  flex: none;
  margin-top: 2px;
  height: 1418px;
  display: flex;
  flex-direction: column;
  background: #fff;
  border-radius: 10px;
  overflow: hidden;
  box-shadow: 0 2px 0 #3c1c48;
}
.tabstrip {
  flex: none;
  height: 84px;
  display: flex;
  background: #dee1e6;
}
.lights { width: 158px; display: flex; gap: 16px; padding: 31px 0 0 26px; }
.lights i { width: 24px; height: 24px; border-radius: 50%; }
.red { background: #fc605c; border: 1px solid #e2514b; }
.amber { background: #fdbc40; border: 1px solid #dfa133; }
.lime { background: #34c84a; border: 1px solid #29a83a; }
.tab {
  width: 186px;
  height: 68px;
  margin-top: 16px;
  padding: 0 23px 0 22px;
  display: flex;
  align-items: center;
  color: #3c4043;
  font-size: 24px;
  background: linear-gradient(#919498, #919498) no-repeat 184px 15px / 2px 40px;
}
.tab svg { width: 32px; height: 32px; }
.tab span {
  width: 59px;
  margin: 0 16px 0 17px;
  overflow: hidden;
  white-space: nowrap;
  letter-spacing: -0.5px;
  -webkit-mask-image: linear-gradient(90deg, #000 62%, transparent);
  mask-image: linear-gradient(90deg, #000 62%, transparent);
}
.tab .x { width: 17px; height: 17px; }
.tab.last { background: none; }
.tab.active {
  margin-left: -2px;
  width: 187px;
  padding-left: 24px;
  background: #fff;
  border-radius: 16px 16px 0 0;
  box-shadow: -14px 16px 0 #fff, 14px 16px 0 #fff;
  clip-path: path("M-16 68Q0 68 0 52V16Q0 0 16 0H171Q187 0 187 16V52Q187 68 203 68Z");
}
.tab.active span { width: 58px; }
.plus { width: 24px; height: 24px; margin: 38px 0 0 31px; }

.toolbar {
  flex: none;
  height: 72px;
  padding-left: 24px;
  display: flex;
  align-items: center;
}
.nav { width: 40px; height: 40px; margin-right: 24px; }
.omnibox {
  width: 1935px;
  height: 56px;
  margin-left: 1px;
  padding: 0 19px 0 22px;
  border-radius: 28px;
  background: #f1f3f4;
  display: flex;
  align-items: center;
  font-size: 27px;
  white-space: nowrap;
}
.info { width: 28px; height: 28px; }
.scheme { margin-left: 18px; width: 59px; color: #5f6368; }
.bar { width: 2px; height: 32px; margin-right: 18px; background: #9da0a4; }
.url { color: #202124; letter-spacing: -0.1px; }
.star { width: 34px; height: 34px; margin-left: auto; }
.extensions { margin-left: 28px; display: flex; align-items: center; gap: 32px; }
.extensions svg { width: 32px; height: 32px; }
.avatar {
  width: 44px; height: 44px; margin: 0 -6px; border-radius: 50%;
  background: #ee6c1f; color: #fff; font-size: 20px; line-height: 44px; text-align: center;
}

.bookmarks {
  flex: none;
  height: 66px;
  padding: 0 0 10px 28px;
  border-bottom: 2px solid #d6d9dd;
  display: grid;
  grid-template-columns: 138px 308px 272px 178px 308px 308px 308px 308px 212px 138px auto;
  align-items: center;
  color: #3c4043;
  font-size: 24px;
  letter-spacing: -0.22px;
  line-height: 32px;
  white-space: nowrap;
}
.bookmarks div { height: 32px; display: flex; align-items: center; gap: 16px; }
.bookmarks span { height: 32px; }
.bookmarks svg { width: 32px; height: 32px; }
.more { font-size: 26px; }

/* web page */
.viewport { flex: none; height: 1166px; display: flex; }
.page {
  width: 2530px;
  overflow: hidden;
  background: linear-gradient(#d4d8ec 0, #d4d8ec 1110px, #cfd3e8 1166px);
  color: #000;
  font-family: "Liberation Serif", serif;
}
h1 {
  margin: 0 0 98px;
  height: 138px;
  background: #1a4d97;
  color: #fff;
  text-align: center;
  font: 400 48.800px/144px Papyrus, Lato, sans-serif;
}
.row { height: 66px; margin: 0 0 52px; display: flex; justify-content: center; }
.row label {
  color: #040441;
  font: bold 38px/60px Baskerville, "Liberation Serif", serif;
  letter-spacing: 0.32px;
  white-space: nowrap;
}
.author label { width: 435px; }
.subject label { width: 467px; }
.row input {
  width: 1046px;
  margin: 0 34px 0 38px;
  padding: 2px 15px;
  border: 2px solid #767676;
  border-radius: 4px;
  background: #fff;
  font: 26.67px "Liberation Sans", sans-serif;
}
.row button {
  width: 120px;
  padding: 0 0 0 1px;
  border: 4px outset #767676;
  border-color: #767676 #212121 #212121 #767676;
  border-radius: 9px;
  background: #1a4d97;
  color: #fff;
  font: 26.67px "Liberation Sans", sans-serif;
}
.subject { margin: 0; }
h2 { margin: 139px 0 0; font-size: 48px; line-height: 54px; text-align: center; }
p { margin: 48px 0 0 64px; font-size: 32px; line-height: 36px; letter-spacing: 0.01px; white-space: nowrap; }
.editions { margin-top: 32px; }
.vscroll { width: 30px; border-left: 2px solid #e6e6e8; background: #fafafa; padding: 12px 0 0 6px; }
.vscroll i { width: 16px; height: 234px; border-radius: 8px; background: #c1c1c1; }
.hscroll {
  flex: none;
  height: 30px;
  padding: 6px 0 0 6px;
  border-top: 2px solid #e2e2e4;
  background: linear-gradient(90deg, #fff 0, #fff0 200px, #fff0 2400px, #fff), linear-gradient(#f3f3f3, #e9e9e9);
}
.hscroll i { width: 122px; height: 16px; border-radius: 8px; background: #bcbcbc; }

/* desktop and dock */
.behind { flex: none; height: 8px; padding: 2px 133px 0 510px; }
.behind i { height: 6px; background: linear-gradient(90deg, #8e8b8d 0, #858284 280px, #646265 285px, #646265 1850px, #8e8c8e 1855px); }
.dock {
  flex: none;
  width: 2392px;
  height: 128px;
  margin-left: 84px;
  padding-left: 8px;
  border-radius: 12px 12px 0 0;
  background: linear-gradient(#696060, #6c5a57);
  display: flex;
}
.slot {
  width: 103.8px;
  padding-top: 12px;
  display: flex;
  flex-direction: column;
  align-items: center;
  gap: 8px;
}
.slot svg { width: 96px; height: 96px; }
.slot.open::after { content: ""; width: 8px; height: 8px; border-radius: 50%; background: #0a0808; }
.rule { width: 2px; background: #3f3434; }
.short { height: 64px; margin: 32px 22px 0; }
.tall { height: 96px; margin: 16px 22px 0 24px; }
```
